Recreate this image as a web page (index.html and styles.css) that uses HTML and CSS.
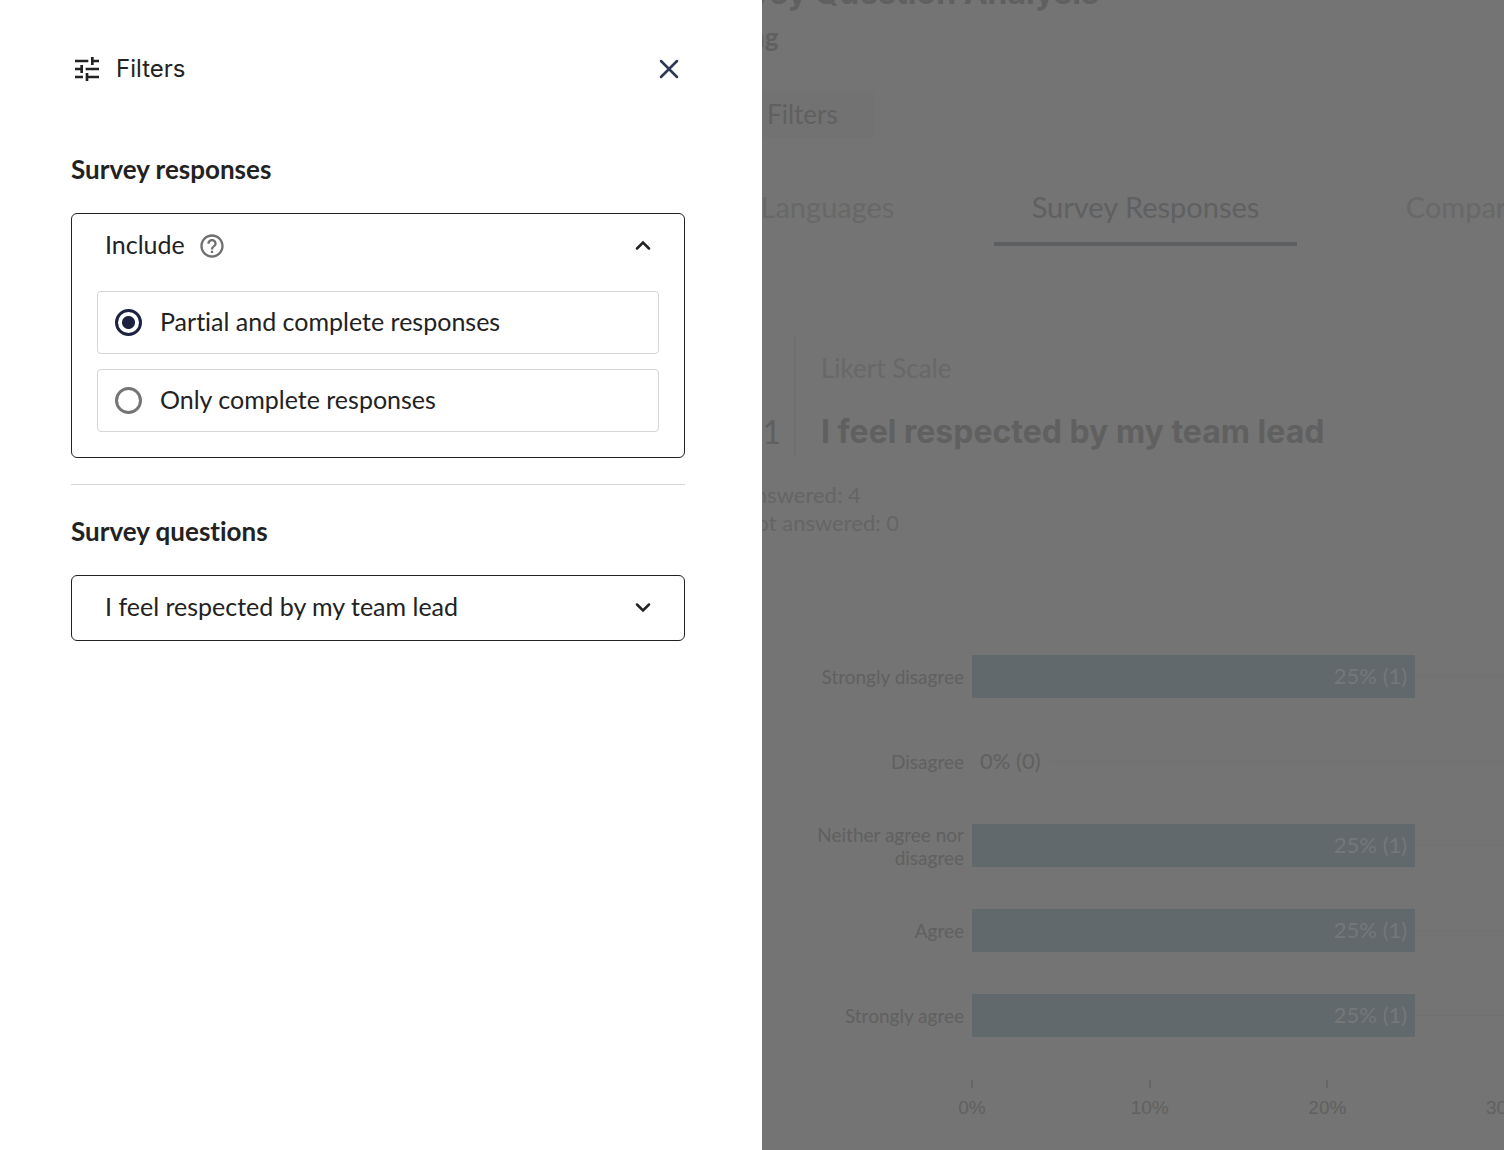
FILE: index.html
```html
<!DOCTYPE html>
<html lang="en">
<head>
  <meta charset="UTF-8">
  <title>Survey Question Analysis</title>
  <link rel="stylesheet" href="styles.css">
</head>
<body>

  <!-- Filters drawer -->
  <aside class="drawer" aria-label="Filters">
    <div class="drawer-header">
      <svg class="icon-tune" viewBox="0 0 24 24"><path d="M3 17v2h6v-2H3zM3 5v2h10V5H3zm10 16v-2h8v-2h-8v-2h-2v6h2zM7 9v2H3v2h4v2h2V9H7zm14 4v-2H11v2h10zm-6-4h2V7h4V5h-4V3h-2v6z"/></svg>
      <span class="drawer-title">Filters</span>
      <button class="close" aria-label="Close">
        <svg viewBox="0 0 20 20"><path d="M2 2l16 16M18 2L2 18"/></svg>
      </button>
    </div>

    <h2>Survey responses</h2>
    <div class="accordion">
      <button class="accordion-head" aria-expanded="true">
        <span>Include</span>
        <svg class="icon-help" viewBox="0 0 24 24"><path d="M11 18h2v-2h-2v2zm1-16C6.480 2 2 6.480 2 12s4.480 10 10 10 10-4.480 10-10S17.520 2 12 2zm0 18c-4.410 0-8-3.590-8-8s3.590-8 8-8 8 3.590 8 8-3.590 8-8 8zm0-14c-2.210 0-4 1.790-4 4h2c0-1.100.9-2 2-2s2 .9 2 2c0 2-3 1.750-3 5h2c0-2.250 3-2.500 3-5 0-2.210-1.790-4-4-4z"/></svg>
        <svg class="chevron" viewBox="0 0 18 12"><path d="M3 8.500L9 2.500l6 6"/></svg>
      </button>
      <div class="options">
        <label class="option">
          <input type="radio" name="include" checked>
          <span>Partial and complete responses</span>
        </label>
        <label class="option">
          <input type="radio" name="include">
          <span>Only complete responses</span>
        </label>
      </div>
    </div>

    <hr>

    <h2>Survey questions</h2>
    <div class="accordion">
      <button class="accordion-head" aria-expanded="false">
        <span>I feel respected by my team lead</span>
        <svg class="chevron" viewBox="0 0 18 12"><path d="M3 2.500l6 6 6-6"/></svg>
      </button>
    </div>
  </aside>

  <!-- Dimmed page -->
  <main class="page">
    <header class="page-header">
      <h1>Survey Question Analysis</h1>
      <p class="company">Testing</p>
      <button class="filters">
        <svg viewBox="0 0 24 24"><path d="M3 17v2h6v-2H3zM3 5v2h10V5H3zm10 16v-2h8v-2h-8v-2h-2v6h2zM7 9v2H3v2h4v2h2V9H7zm14 4v-2H11v2h10zm-6-4h2V7h4V5h-4V3h-2v6z"/></svg>
        <span>Filters</span>
      </button>
    </header>

    <nav class="tabs">
      <a href="#languages">Languages</a>
      <a href="#responses" class="active">Survey Responses</a>
      <a href="#compare">Compare</a>
    </nav>

    <section class="question">
      <div class="number">1</div>
      <div class="question-text">
        <p>Likert Scale</p>
        <h3>I feel respected by my team lead</h3>
      </div>
    </section>

    <div class="stats">
      <div>Answered: 4</div>
      <div>Not answered: 0</div>
    </div>

    <section class="chart">
      <div class="rows">
        <div class="row">
          <div class="label">Strongly disagree</div>
          <div class="plot"><div class="bar" style="width: 83.3%">25% (1)</div></div>
        </div>
        <div class="row">
          <div class="label">Disagree</div>
          <div class="plot"><div class="bar empty">0% (0)</div></div>
        </div>
        <div class="row">
          <div class="label">Neither agree nor disagree</div>
          <div class="plot"><div class="bar" style="width: 83.3%">25% (1)</div></div>
        </div>
        <div class="row">
          <div class="label">Agree</div>
          <div class="plot"><div class="bar" style="width: 83.3%">25% (1)</div></div>
        </div>
        <div class="row">
          <div class="label">Strongly agree</div>
          <div class="plot"><div class="bar" style="width: 83.3%">25% (1)</div></div>
        </div>
      </div>
      <div class="axis">
        <div class="tick"><span>0%</span></div>
        <div class="tick"><span>10%</span></div>
        <div class="tick"><span>20%</span></div>
        <div class="tick"><span>30%</span></div>
      </div>
    </section>
  </main>

</body>
</html>
```
FILE: styles.css
```css
* {
  box-sizing: border-box;
}

body {
  margin: 0;
  height: 100vh;
  overflow: hidden;
  background: #747474;
  font-family: Lato, sans-serif;
  font-size: 26px;
  font-variant-ligatures: none;
  color: #222;
}

h1, h2, h3, p {
  margin: 0;
}

button {
  font: inherit;
  color: inherit;
  background: none;
  border: none;
  padding: 0;
  cursor: pointer;
}

/* Drawer */
.drawer {
  position: fixed;
  top: 0;
  bottom: 0;
  left: 0;
  z-index: 1;
  width: 762px;
  padding: 49px 77px 0 71px;
  background: white;
}

.drawer-header {
  display: flex;
  align-items: center;
  height: 40px;
  margin-bottom: 60px;
}

.icon-tune {
  width: 32px;
  height: 32px;
  margin-right: 13px;
  fill: #222;
}

.drawer-title {
  padding-bottom: 2px;
  font-family: Inter, sans-serif;
  font-size: 24px;
}

.close {
  display: flex;
  margin-left: auto;
  padding: 6px;
}

.close svg {
  width: 20px;
  height: 20px;
  fill: none;
  stroke: #2e3757;
  stroke-width: 2.5;
  stroke-linecap: round;
}

.drawer h2 {
  font-size: 26px;
  line-height: 40px;
  font-weight: bold;
}

.accordion {
  margin-top: 24px;
  border: 1px solid #222;
  border-radius: 6px;
  font-size: 25px;
}

.accordion-head {
  display: flex;
  align-items: center;
  width: 100%;
  height: 64px;
  padding: 0 32px 0 33px;
}

.accordion-head span,
.option span {
  padding-bottom: 4px;
}

.icon-help {
  width: 28px;
  height: 28px;
  margin-left: 13px;
  fill: #707070;
}

.chevron {
  width: 18px;
  height: 12px;
  margin-left: auto;
  fill: none;
  stroke: #222;
  stroke-width: 2.5;
  stroke-linecap: round;
}

.options {
  display: flex;
  flex-direction: column;
  gap: 15px;
  padding: 13px 25px 25px;
}

.option {
  display: flex;
  align-items: center;
  gap: 18px;
  height: 63px;
  padding: 0 17px;
  border: 1px solid #d6d6d6;
  border-radius: 4px;
}

.option input {
  appearance: none;
  width: 27px;
  height: 27px;
  margin: 0;
  border: 3px solid #757575;
  border-radius: 50%;
}

.option input:checked {
  border-color: #1c2240;
  background: radial-gradient(circle, #1c2240 6px, white 7px);
}

hr {
  margin: 26px 0;
  border: none;
  border-top: 1px solid #d6d6d6;
}

/* Page behind the drawer */
.page {
  margin-top: -27px;
  padding-left: 676px;
  overflow: hidden;
  color: #606060;
}

.page-header {
  padding: 0 20px;
}

.page-header h1 {
  font-family: Inter, sans-serif;
  font-size: 32px;
  line-height: 40px;
}

.company {
  margin-top: 8px;
  line-height: 32px;
  font-weight: bold;
}

.filters {
  display: flex;
  align-items: center;
  gap: 15px;
  height: 46px;
  margin-top: 39px;
  padding: 0 36px 0 28px;
  background: #727272;
  border-radius: 4px;
}

.filters span {
  padding-bottom: 3px;
}

.filters svg {
  width: 28px;
  height: 28px;
  fill: #606060;
}

.tabs {
  display: flex;
  gap: 15px;
  margin-top: 32px;
  border-bottom: 1px solid #727272;
}

.tabs a {
  flex: 0 0 303px;
  height: 76px;
  border-bottom: 4px solid transparent;
  text-align: center;
  font-size: 29px;
  line-height: 74px;
  color: #686868;
  text-decoration: none;
}

.tabs .active {
  color: #5f6062;
  border-color: #5e5f60;
}

.question {
  display: flex;
  height: 119px;
  margin-top: 89px;
}

.number {
  width: 120px;
  padding: 76px 13px 0 0;
  border-right: 2px solid #6f6f6f;
  text-align: right;
  font-size: 32px;
  line-height: 40px;
}

.question-text {
  padding-left: 25px;
}

.question-text p {
  line-height: 64px;
  color: #686868;
}

.question-text h3 {
  margin-top: 12px;
  font-family: Inter, sans-serif;
  font-size: 32px;
  line-height: 40px;
}

.stats {
  margin-top: 26px;
  padding-left: 64px;
  font-size: 22px;
  line-height: 28px;
  color: #656565;
}

.chart {
  margin-top: 97px;
}

.rows {
  display: flex;
  flex-direction: column;
  height: 424px;
}

.row {
  display: flex;
  flex: 1;
  align-items: center;
}

.label {
  width: 160px;
  margin-left: 128px;
  font-size: 19px;
  line-height: 23px;
  text-align: right;
}

.plot {
  flex: 1;
  margin-left: 8px;
  background: linear-gradient(#717171, #717171) center / 100% 1px no-repeat;
}

.bar {
  height: 43px;
  padding: 0 8px;
  background: #62696d;
  color: #747879;
  font-size: 22px;
  line-height: 41px;
  text-align: right;
}

.empty {
  width: 78px;
  background: #747474;
  color: #606060;
  text-align: left;
}

.axis {
  display: grid;
  grid-template-columns: repeat(3, 1fr) 0;
  margin: 22px 0 0 295px;
}

.tick {
  display: flex;
  justify-content: center;
  width: 2px;
  padding-top: 16px;
  background: linear-gradient(#666, #666) 0 0 / 2px 8px no-repeat;
  font-family: "Liberation Sans", sans-serif;
  font-size: 19px;
  line-height: 24px;
}
```
